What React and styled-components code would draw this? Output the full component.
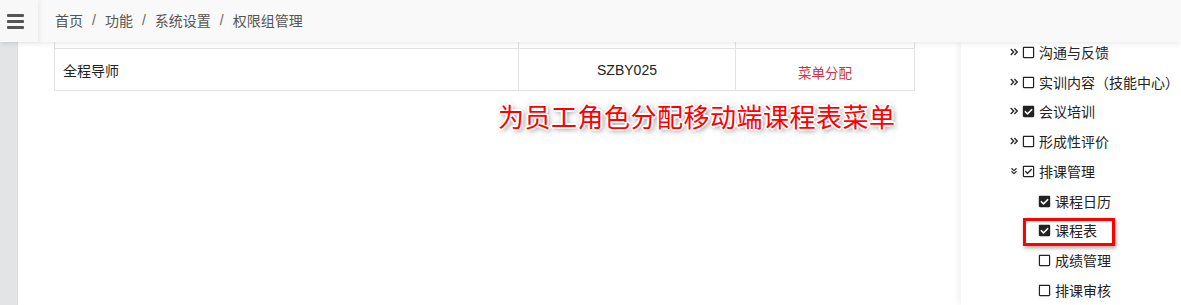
import React from "react";
import styled, { createGlobalStyle } from "styled-components";
import { FaRegSquare, FaCheckSquare, FaRegCheckSquare } from "react-icons/fa";

const Global = createGlobalStyle`
  html, body { margin: 0; padding: 0; background: #fff; }
  body { font-family: "Liberation Sans", "Noto Sans CJK SC", sans-serif; font-size: 14px; color: #333; }
`;

const Page = styled.div`
  width: 1181px;
  height: 305px;
  overflow: hidden;
  display: flex;
  flex-direction: column;
  background: #fff;
`;

const Header = styled.header`
  position: relative;
  z-index: 3;
  height: 42px;
  flex: 0 0 42px;
  display: flex;
  align-items: stretch;
  background: #f9f9f9;
  box-shadow: 0 2px 5px rgba(0, 0, 0, 0.08);
`;

const MenuToggle = styled.div`
  width: 38px;
  display: flex;
  flex-direction: column;
  justify-content: center;
  align-items: flex-start;
  gap: 3px;
  padding-left: 7px;
  box-sizing: border-box;
  background: #f8f8f8;
  box-shadow: 2px 0 4px rgba(0, 0, 0, 0.06);
  position: relative;
  z-index: 1;
`;

const Bar = styled.span`
  display: block;
  width: 17px;
  height: 3px;
  border-radius: 1px;
  background: #555;
`;

const Breadcrumb = styled.nav`
  display: flex;
  align-items: center;
  padding-left: 17px;
  padding-bottom: 2px;
  font-family: "Noto Sans CJK SC", sans-serif;
  font-size: 14px;
  line-height: 20px;
  color: #555;
`;

const Sep = styled.span`
  margin: 0 9px;
  font-family: "Liberation Sans", sans-serif;
  color: #666;
`;

const Body = styled.div`
  flex: 1;
  display: flex;
  min-height: 0;
`;

const SideStrip = styled.div`
  width: 18px;
  flex: 0 0 18px;
  background: #e3e4e5;
  box-shadow: inset -1px 0 1px rgba(0, 0, 0, 0.03);
`;

const Main = styled.main`
  position: relative;
  flex: 1;
  padding-left: 36px;
  background: #fff;
`;

const TableBox = styled.div`
  width: 861px;
  border: 1px solid #e3e3e3;
  border-top: none;
  box-sizing: border-box;
`;

const Row = styled.div`
  display: grid;
  grid-template-columns: 464px 217px 1fr;
  height: ${(p) => p.$h}px;
  border-top: ${(p) => (p.$divider ? "1px solid #e3e3e3" : "none")};
`;

const Cell = styled.div`
  display: flex;
  align-items: center;
  justify-content: ${(p) => (p.$center ? "center" : "flex-start")};
  padding: ${(p) => (p.$center ? "0" : "0 8px")};
  border-right: ${(p) => (p.$last ? "none" : "1px solid #e3e3e3")};
  font-size: 14px;
  line-height: 20px;
  color: #222;
  overflow: hidden;
`;

const CnText = styled.span`
  font-family: "Noto Sans CJK SC", sans-serif;
`;

const ActionLink = styled.a`
  font-family: "Noto Sans CJK SC", sans-serif;
  color: #c9354a;
  font-size: 13.5px;
  padding-top: 4px;
  text-decoration: none;
`;

const Note = styled.div`
  position: absolute;
  left: 480px;
  top: 57px;
  font-family: "Noto Sans CJK SC", sans-serif;
  font-size: 26px;
  line-height: 34px;
  letter-spacing: 0.5px;
  color: #ff0000;
  white-space: nowrap;
  text-shadow: -1px -1px 0 #fff, 1px -1px 0 #fff, -1px 1px 0 #fff, 1px 1px 0 #fff,
    0 -2px 0 #fff, 0 2px 0 #fff, -2px 0 0 #fff, 2px 0 0 #fff,
    2px 2px 5px rgba(0, 0, 0, 0.5), 0 0 6px rgba(0, 0, 0, 0.3);
`;

const Panel = styled.aside`
  width: 220px;
  flex: 0 0 220px;
  background: #fff;
  box-shadow: -3px 0 6px rgba(0, 0, 0, 0.05);
  position: relative;
  z-index: 1;
  overflow: hidden;
`;

const Tree = styled.ul`
  list-style: none;
  margin: -5px 0 0;
  padding: 0;
`;

const Node = styled.li`
  position: relative;
  height: ${(p) => (p.$sub ? 29.6 : 29.8)}px;
  display: flex;
  align-items: center;
  padding-left: ${(p) => (p.$sub ? 77 : 49)}px;
  font-family: "Noto Sans CJK SC", sans-serif;
  font-size: 14px;
  color: #222;
  white-space: nowrap;

  ${(p) =>
    p.$marked &&
    `
    &::after {
      content: "";
      position: absolute;
      left: 62px;
      top: 2px;
      width: 86px;
      height: 22px;
      border: 3px solid #ff0000;
      box-shadow: 1px 2px 4px rgba(0,0,0,0.35);
      pointer-events: none;
    }
  `}
`;

const Toggle = styled.span`
  width: 12px;
  flex: 0 0 12px;
  display: flex;
  align-items: center;
`;

const Box = styled.span`
  width: 17px;
  flex: 0 0 17px;
  display: flex;
  align-items: center;
  color: #222;
  font-size: 13px;
  position: relative;
  top: 0.5px;
`;

const Label = styled.span`
  line-height: 20px;
`;

function Chevrons({ down }) {
  return (
    <svg
      width="8"
      height="8"
      viewBox="0 0 8 8"
      style={down ? { transform: "rotate(90deg) scale(0.85)" } : undefined}
    >
      <path d="M0.8 1 L3.6 4 L0.8 7" fill="none" stroke="#333" strokeWidth="1.5" />
      <path d="M4.4 1 L7.2 4 L4.4 7" fill="none" stroke="#333" strokeWidth="1.5" />
    </svg>
  );
}

function CheckIcon({ state }) {
  if (state === "checked") return <FaCheckSquare />;
  if (state === "tick") return <FaRegCheckSquare />;
  return <FaRegSquare />;
}

const tree = [
  { label: "沟通与反馈", state: "off", toggle: "right" },
  { label: "实训内容（技能中心）", state: "off", toggle: "right" },
  { label: "会议培训", state: "checked", toggle: "right" },
  { label: "形成性评价", state: "off", toggle: "right" },
  { label: "排课管理", state: "tick", toggle: "down" },
  { label: "课程日历", state: "checked", sub: true },
  { label: "课程表", state: "checked", sub: true, marked: true },
  { label: "成绩管理", state: "off", sub: true },
  { label: "排课审核", state: "off", sub: true },
];

export default function App() {
  return (
    <Page>
      <Global />
      <Header>
        <MenuToggle>
          <Bar />
          <Bar />
          <Bar />
        </MenuToggle>
        <Breadcrumb>
          <span>首页</span>
          <Sep>/</Sep>
          <span>功能</span>
          <Sep>/</Sep>
          <span>系统设置</span>
          <Sep>/</Sep>
          <span>权限组管理</span>
        </Breadcrumb>
      </Header>
      <Body>
        <SideStrip />
        <Main>
          <TableBox>
            <Row $h={6}>
              <Cell />
              <Cell $center />
              <Cell $center $last />
            </Row>
            <Row $h={41} $divider>
              <Cell>
                <CnText>全程导师</CnText>
              </Cell>
              <Cell $center>SZBY025</Cell>
              <Cell $center $last>
                <ActionLink href="#">菜单分配</ActionLink>
              </Cell>
            </Row>
          </TableBox>
          <Note>为员工角色分配移动端课程表菜单</Note>
        </Main>
        <Panel>
          <Tree>
            {tree.map((n) => (
              <Node key={n.label} $sub={n.sub} $marked={n.marked}>
                {!n.sub && (
                  <Toggle>
                    <Chevrons down={n.toggle === "down"} />
                  </Toggle>
                )}
                <Box>
                  <CheckIcon state={n.state} />
                </Box>
                <Label>{n.label}</Label>
              </Node>
            ))}
          </Tree>
        </Panel>
      </Body>
    </Page>
  );
}
